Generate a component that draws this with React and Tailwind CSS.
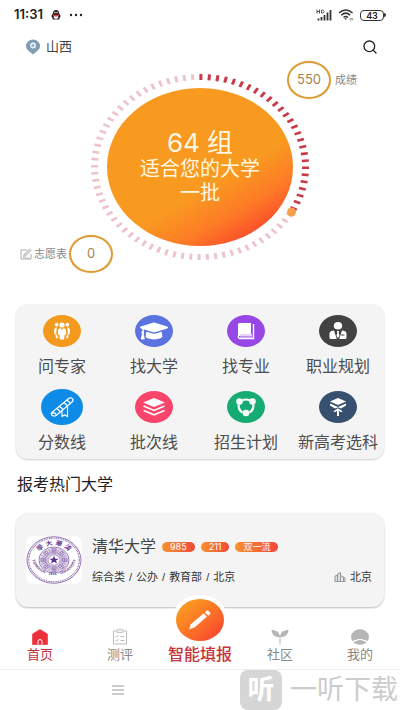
import { LuSearch } from 'react-icons/lu';
import { FaGraduationCap } from 'react-icons/fa';

const features = [
  { label: '问专家', shape: 'w-[38px] h-8 bg-[#f39a1e]', icon: <ExpertsIcon /> },
  { label: '找大学', shape: 'w-[38px] h-8 bg-[#5b73e0]', icon: <FaGraduationCap className="w-7 h-6" /> },
  { label: '找专业', shape: 'w-[38px] h-8 bg-[#9747e6]', icon: <BookIcon /> },
  { label: '职业规划', shape: 'w-[38px] h-8 bg-[#424242]', icon: <CareerIcon /> },
  { label: '分数线', shape: 'w-[42px] h-9 -my-0.5 bg-[#0d8be6]', icon: <ScrollIcon /> },
  { label: '批次线', shape: 'w-[38px] h-8 bg-[#f9456b]', icon: <LayersIcon /> },
  { label: '招生计划', shape: 'w-[38px] h-8 bg-[#17ab74]', icon: <PlanIcon /> },
  { label: '新高考选科', shape: 'w-[38px] h-8 bg-[#38506f]', icon: <SubjectIcon /> },
];

function ExpertsIcon() {
  return (
    <svg viewBox="0 0 20 20" className="w-5 h-5" fill="currentColor">
      <circle cx="10" cy="4" r="2.6" />
      <circle cx="4.6" cy="3.6" r="1.9" />
      <circle cx="15.4" cy="3.6" r="1.9" />
      <path d="M6.2 8.2 8.4 7l1.6 1.7L11.6 7l2.2 1.2.4 4.8-1.6 1.2-.5 4.3H7.9l-.5-4.3L5.8 13z" />
      <path d="M4.8 6.2C2.6 6.6 1.9 8 2 9.8l.4 3 1 .8.6 3.6h1.8l-.3-2.7-1.3-1.2.3-4.8zM15.2 6.2c2.2.4 2.9 1.8 2.8 3.6l-.4 3-1 .8-.6 3.6h-1.8l.3-2.7 1.3-1.2-.3-4.8z" />
    </svg>
  );
}

function BookIcon() {
  return (
    <svg viewBox="0 0 20 20" className="w-5 h-5" fill="none" stroke="currentColor">
      <path d="M3.5 2H15v11H4.5L2 15V3.5A1.5 1.5 0 0 1 3.5 2z" fill="currentColor" stroke="none" />
      <path d="M17.5 3v14.5H4A1.7 1.7 0 0 1 4 14h12" strokeWidth="1.4" />
      <path d="M4 16h12" strokeWidth=".8" />
    </svg>
  );
}

function CareerIcon() {
  return (
    <svg viewBox="0 0 20 20" className="w-5 h-5" fill="currentColor">
      <ellipse cx="10" cy="4.8" rx="4.2" ry="3.8" />
      <path d="M6 9.5 8.8 18H3a1.5 1.5 0 0 1-1.5-1.5v-4c0-1.800 2.300-3 4.500-3zM14 9.500 11.200 18H17a1.500 1.500 0 0 0 1.500-1.500v-4c0-1.800-2.300-3-4.500-3z" />
      <path d="M8.7 10h2.6l-.6 1.6.8 3.4-1.5 2-1.5-2 .8-3.4z" />
      <path d="M13 14h3.500" stroke="#424242" />
    </svg>
  );
}

function ScrollIcon() {
  return (
    <svg viewBox="0 0 26 24" className="w-7 h-6" fill="none" stroke="currentColor" strokeWidth="1.2" strokeLinejoin="round">
      <path d="M3 17.5 20 3.3c1.5-1 3.6-.3 4 1.2.2 1-.2 1.8-1 2.5L7.5 20.2c-1.5 1.1-3.9 1-4.9-.3-.6-.8-.4-1.7.4-2.4z" />
      <path d="m8 13.5 3.5 3.5M10.5 11.3l3.7 3.5M15 7.5l3.5 3.2M18 5l3.5 3.2M3 18.500c2-1 3.500-.5 4.500 1.500M13 16v5.500l2.500-1.600 3 1.600V11.500" />
    </svg>
  );
}

function LayersIcon() {
  return (
    <svg viewBox="0 0 26 22" className="w-6 h-5" fill="none" stroke="currentColor" strokeWidth="1.8">
      <path d="M13 1 25 6 13 11 1 6z" fill="currentColor" stroke="none" />
      <path d="m1.5 10 11.5 4.8L24.5 10M1.5 14.8l11.5 4.8 11.5-4.8" />
    </svg>
  );
}

function PlanIcon() {
  return (
    <svg viewBox="0 0 22 20" className="w-6 h-5" fill="none" stroke="currentColor" strokeWidth="2.2">
      <path d="M7.5 3.3a8 7.5 0 0 1 7 0M3.6 7.5c-.3 3.5 1 6.3 4 8M18.4 7.5c.3 3.5-1 6.3-4 8" />
      <g fill="currentColor" stroke="none">
        <circle cx="4.5" cy="4.5" r="3.3" />
        <circle cx="17.5" cy="4.5" r="3.3" />
        <circle cx="11" cy="16" r="3.3" />
      </g>
    </svg>
  );
}

function SubjectIcon() {
  return (
    <svg viewBox="0 0 22 20" className="w-6 h-5" fill="currentColor">
      <path d="M11 1 19 4.5 11 8 3 4.5z" />
      <path d="m3 6.5 8 3.5 8-3.5v2L14 11.500l-3-1.300-3 1.300-5-3z" />
      <path d="m11 11.200 4.500 3-1 1-2.500-1.300V19h-2v-5.100l-2.500 1.300-1-1z" />
    </svg>
  );
}

function PinIcon() {
  return (
    <svg viewBox="0 0 14 15" className="w-3.5 h-4">
      <path d="M7 0a7 6.5 0 0 1 7 6.5c0 4-4.5 6-7 8.5-2.5-2.5-7-4.5-7-8.5A7 6.5 0 0 1 7 0z" fill="#7f9cb5" />
      <circle cx="7" cy="6" r="2.3" fill="#8eb6dc" stroke="#fff" strokeWidth="1.2" />
    </svg>
  );
}

function StatusBar() {
  return (
    <div className="flex items-center justify-between h-7 px-3.5 pt-0.5 text-[#222]">
      <div className="flex items-center gap-2">
        <span className="text-[13px] font-semibold font-[Inter,sans-serif]">11:31</span>
        <svg viewBox="0 0 10 10" className="w-2.5 h-2.5">
          <path d="M5 0c2 0 3 1.3 3 3l1.7 3.2-.8 1L8 9.5H2l-.9-2.3-.8-1L2 3c0-1.7 1-3 3-3z" fill="#2b2020" />
          <ellipse cx="5" cy="7" rx="2.3" ry="2" fill="#fff" />
          <path d="M2 4.3q3 1.5 6 0v1.5q-3 1.3-6 0z" fill="#d8434a" />
          <circle cx="4" cy="2.5" r=".7" fill="#fff" />
          <circle cx="6" cy="2.5" r=".7" fill="#fff" />
        </svg>
        <svg viewBox="0 0 14 4" className="w-3.5 h-1" fill="#222">
          <circle cx="2" cy="2" r="1.2" />
          <circle cx="7" cy="2" r="1.2" />
          <circle cx="12" cy="2" r="1.2" />
        </svg>
      </div>
      <div className="flex items-center gap-1.5">
        <svg viewBox="0 0 16 11" className="w-4 h-3" stroke="#333" fill="none">
          <path d="M1 0v4M3.5 0v4M1 2h2.500M5.500.5v3h1c2 0 2-3 0-3z" strokeWidth=".8" />
          <path d="M2.5 11V9M5.5 11V7.5M8.5 11V5.5M11.5 11V3M14.5 11V.5" strokeWidth="1.8" />
        </svg>
        <svg viewBox="0 0 16 12" className="w-4 h-3" stroke="#333" fill="none" strokeWidth="1.5">
          <path d="M1 4c4-4 9.500-4 13.500 0M3.300 6.300c2.700-2.600 6.200-2.600 8.900 0M5.500 8.500q2.300-1.800 4.500 0" />
          <path d="m6.3 9.3 1.4 1.7 1.4-1.7z" fill="#333" stroke="none" />
          <path d="M12 9.5h2.5V11H12z" strokeWidth=".8" stroke="#888" />
        </svg>
        <div className="flex items-center">
          <span className="flex items-center justify-center w-6 h-[11px] border border-[#333] rounded text-[9px] leading-none font-semibold font-[Inter,sans-serif]">43</span>
          <span className="w-0.5 h-1 bg-[#333] rounded-r" />
        </div>
      </div>
    </div>
  );
}

const TICKS = 80;
const ACTIVE_TICKS = 27;

function TickRing() {
  return (
    <svg viewBox="0 0 220 188" className="w-full h-full" fill="none">
      <defs>
        <linearGradient id="disc" x1="0.15" y1="0" x2="0.85" y2="1">
          <stop offset="0.6" stopColor="#f99a20" />
          <stop offset="0.78" stopColor="#fd7b26" />
          <stop offset="0.92" stopColor="#fb4f2a" />
        </linearGradient>
      </defs>
      <ellipse cx="110" cy="94" rx="93" ry="79" fill="url(#disc)" />
      <g transform="translate(110 94) scale(1 0.853)">
        {Array.from({ length: TICKS }, (_, i) => (
          <line
            key={i}
            x1="0"
            x2="0"
            y1="-109"
            y2="-102"
            strokeWidth="3"
            stroke={i < ACTIVE_TICKS ? '#c93a48' : '#edc4cc'}
            transform={`rotate(${(i * 360) / TICKS + 0.5})`}
          />
        ))}
      </g>
      <circle cx="201.5" cy="139" r="4.5" fill="#f7a04c" />
    </svg>
  );
}

function ScoreCircle({ children }) {
  return (
    <span className="flex items-center justify-center w-11 h-[38px] rounded-[50%] border-2 border-[#dc9c38] shadow-[0_0_1px_#f0bb50] text-[13px] text-[#a98245] font-[Inter,sans-serif]">
      {children}
    </span>
  );
}

function Hero() {
  return (
    <section className="flex justify-center pt-[13px] pb-[43px]">
      <div className="relative w-[220px] h-[188px]">
        <TickRing />
        <div className="absolute inset-0 flex flex-col items-center pt-14 text-[#fff8e0] text-xl leading-6">
          <p className="text-[26px] leading-7"><span className="font-[Inter,sans-serif]">64</span> 组</p>
          <p>适合您的大学</p>
          <p>一批</p>
        </div>
        <a href="#score" className="absolute left-[197px] -top-3 flex items-center gap-1 whitespace-nowrap text-[11px] text-[#888]">
          <ScoreCircle>550</ScoreCircle>
          成绩
        </a>
        <a href="#list" className="absolute right-[197px] top-[162px] flex items-center gap-0.5 whitespace-nowrap text-[11px] text-[#888]">
          <svg viewBox="0 0 12 12" className="w-3 h-3" fill="none" stroke="#aaa">
            <path d="M11 6v5H1V2h6" />
            <path d="m3.5 8.5.6-2.2L9.5 1 11 2.500 5.700 8zM3 10h6" fill="#ddd" strokeWidth=".8" />
          </svg>
          志愿表
          <ScoreCircle>0</ScoreCircle>
        </a>
      </div>
    </section>
  );
}

function FeatureGrid() {
  return (
    <section className="mx-4 pt-[11px] pb-1 rounded-xl bg-[#f4f4f4] shadow-[0_1px_2px_#ccc] grid grid-cols-4 gap-y-3">
      {features.map((f) => (
        <button key={f.label} type="button" className="flex flex-col items-center gap-2 text-base leading-6 text-[#4d4d4d] whitespace-nowrap">
          <span className={`flex items-center justify-center rounded-[50%] text-white ${f.shape}`}>{f.icon}</span>
          {f.label}
        </button>
      ))}
    </section>
  );
}

function SchoolSeal() {
  const petals = Array.from({ length: 8 }, (_, i) => i * 45);
  return (
    <svg viewBox="0 0 56 48" className="w-14 h-12 bg-white rounded-lg shrink-0" role="img" aria-label="清华大学">
      <g transform="translate(28 24) scale(1 0.86)" fill="none" stroke="#8a68aa">
        <circle r="27" strokeWidth="1" />
        <circle r="25.3" strokeWidth="1.3" strokeDasharray="1 .8" />
        <circle r="15" strokeWidth="1" />
        <circle r="14.2" fill="#e0d6ea" stroke="none" />
        <circle r="6" fill="#fff" strokeWidth=".7" />
        <path id="sealTop" d="M-17.5 0a17.5 17.5 0 0 1 35 0" stroke="none" />
        <path id="sealBottom" d="M-22.5-5a22.5 22.5 0 1 0 45 0" stroke="none" />
        {petals.map((a) => (
          <g key={a} transform={`rotate(${a})`}>
            <path d="M-2-13h4v5h-4zM0-13v5M-2-10.5h4" strokeWidth=".8" />
            <path d="M5.3-12.5 2.7-6.5" strokeWidth=".6" />
          </g>
        ))}
        <path d="m0-4.8 1.3 3.3h3.5L2 .6l1 3.6-3-2.1-3 2.1L-2 .6l-2.8-2.1h3.5z" fill="#5d2f8c" stroke="none" />
        <g fill="#6b4294" stroke="none">
          <text fontSize="7" fontWeight="700"><textPath href="#sealTop" startOffset="50%" textAnchor="middle">學 大 華 清</textPath></text>
          <text fontSize="4" fontWeight="700"><textPath href="#sealBottom" startOffset="50%" textAnchor="middle">TSINGHUA · 1911 · UNIVERSITY</textPath></text>
        </g>
      </g>
    </svg>
  );
}

function Tag({ children }) {
  return (
    <span className="h-2.5 px-2 rounded-full bg-linear-to-r from-[#f79130] to-[#ee4738] text-white text-[9px] leading-[10px] whitespace-nowrap font-[Inter,'Noto_Sans_CJK_SC',sans-serif]">
      {children}
    </span>
  );
}

function SchoolCard() {
  const facts = ['综合类', '公办', '教育部', '北京'];
  return (
    <a href="#school" className="mx-4 flex items-center gap-2.5 pl-2.5 pr-3 h-[94px] rounded-xl bg-[#f4f4f4] shadow-[0_1px_2px_#bbb]">
      <SchoolSeal />
      <div className="flex-1 flex flex-col gap-2.5">
        <div className="flex items-center gap-1.5">
          <h3 className="text-base leading-6 text-[#444]">清华大学</h3>
          <Tag>985</Tag>
          <Tag>211</Tag>
          <Tag>双一流</Tag>
        </div>
        <div className="flex items-center justify-between text-[11px] leading-4 text-[#333]">
          <span className="flex gap-1">
            {facts.map((fact, i) => (
              <span key={fact} className="flex gap-1">
                {i > 0 && <span>/</span>}
                {fact}
              </span>
            ))}
          </span>
          <span className="flex items-center gap-1">
            <svg viewBox="0 0 11 10" className="w-3 h-2.5" fill="#ddd" stroke="#999">
              <path d="M.5 9V4L3 3v6M3 9.5V2L6 .5v9M6 3.5 9 5v4.5M10.5 9.5V6L9 5M0 9.5h11" />
            </svg>
            北京
          </span>
        </div>
      </div>
    </a>
  );
}

function TabBar() {
  const tab = 'flex flex-col items-center text-[13px] leading-5';
  return (
    <nav className="grid grid-cols-5 items-end h-[63px] pb-1 border-b border-[#eee]">
      <a href="#home" className={`${tab} text-[#c8323c]`}>
        <svg viewBox="0 0 16 15" className="w-4 h-4">
          <path d="M8 0 15.500 4.500V15H.5V4.500z" fill="#ec2f38" stroke="#ec2f38" strokeLinejoin="round" strokeWidth=".6" />
          <path d="M6 15v-3a2 2 0 0 1 4 0v3" fill="none" stroke="#fff" />
        </svg>
        首页
      </a>
      <a href="#test" className={`${tab} text-[#888]`}>
        <svg viewBox="0 0 16 16" className="w-4 h-4" fill="none" stroke="#bbb">
          <path d="M4.5 2h-3v13h13V2h-3M5 .8h6v2.500H5z" />
          <path d="m3.5 7 1.2 1.2L6.500 6M8.500 7.500h4M3.500 11l1.200 1.200L6.500 10M8.500 11.500h4" />
        </svg>
        测评
      </a>
      <a href="#fill" className="-mt-4 flex flex-col items-center whitespace-nowrap text-base leading-5 font-medium text-[#c8323c]">
        <span className="flex items-center justify-center w-14 h-[50px] rounded-[50%] bg-white">
          <span className="flex items-center justify-center w-12 h-[42px] rounded-[50%] bg-linear-to-br from-[#fb9420] from-20% to-[#f8432c] to-90%">
            <svg viewBox="0 0 22 20" className="w-6 h-[22px]" fill="#fff">
              <path d="m1 18.5 1.6-4.7L14.2 4l3.2 2.8L6 16.8z" />
              <path d="m15.3 3.1 1.5-1.3c.7-.6 1.4-.5 2 0l1.3 1.2c.6.6.5 1.2 0 1.7l-1.5 1.3z" />
            </svg>
          </span>
        </span>
        智能填报
      </a>
      <a href="#community" className={`${tab} text-[#888]`}>
        <svg viewBox="0 0 18 15" className="w-[18px] h-4" fill="#b5b5b5">
          <path d="M.5.5c5 0 8 2 8.5 7C4 8 1 5.5.5.5zM17.5.5c-5 0-8 2-8.5 7 5 .5 8-2 8.500-7z" />
          <path d="M9 7v8" stroke="#b5b5b5" />
        </svg>
        社区
      </a>
      <a href="#me" className={`${tab} text-[#888]`}>
        <svg viewBox="0 0 18 16" className="w-[18px] h-4">
          <ellipse cx="9" cy="8" rx="9" ry="7.8" fill="#b5b5b5" />
          <path d="M1.5 12.5c2.5 0 4-2 7.5-2s5 2 7.5 2" fill="none" stroke="#fff" strokeWidth="1.2" />
        </svg>
        我的
      </a>
    </nav>
  );
}

function BottomBar() {
  return (
    <footer className="flex items-center justify-between h-10 pl-28 pr-0.5">
      <button type="button" aria-label="菜单">
        <svg viewBox="0 0 12 10" className="w-3 h-2.5" stroke="#999">
          <path d="M0 1h12M0 5h12M0 9h12" />
        </svg>
      </button>
      <div className="flex items-center gap-2 text-[#ccc] text-[27px] leading-none whitespace-nowrap">
        <span className="flex items-center justify-center w-[42px] h-10 rounded-lg bg-[#d6d6d6] text-white font-bold">听</span>
        一听下载
      </div>
    </footer>
  );
}

export default function App() {
  return (
    <div className="bg-white overflow-hidden font-['Liberation_Sans','Noto_Sans_CJK_SC',sans-serif]">
      <StatusBar />
      <header className="flex items-center justify-between h-8 pl-[26px] pr-[22px] pt-1.5">
        <button type="button" className="flex items-center gap-1.5 text-[13px] text-[#444]">
          <PinIcon />
          山西
        </button>
        <button type="button" aria-label="搜索" className="text-[#222]">
          <LuSearch className="w-4 h-4" />
        </button>
      </header>
      <Hero />
      <FeatureGrid />
      <h2 className="px-[17px] pt-3.5 pb-4 text-base leading-6 text-[#222]">报考热门大学</h2>
      <SchoolCard />
      <TabBar />
      <BottomBar />
    </div>
  );
}
